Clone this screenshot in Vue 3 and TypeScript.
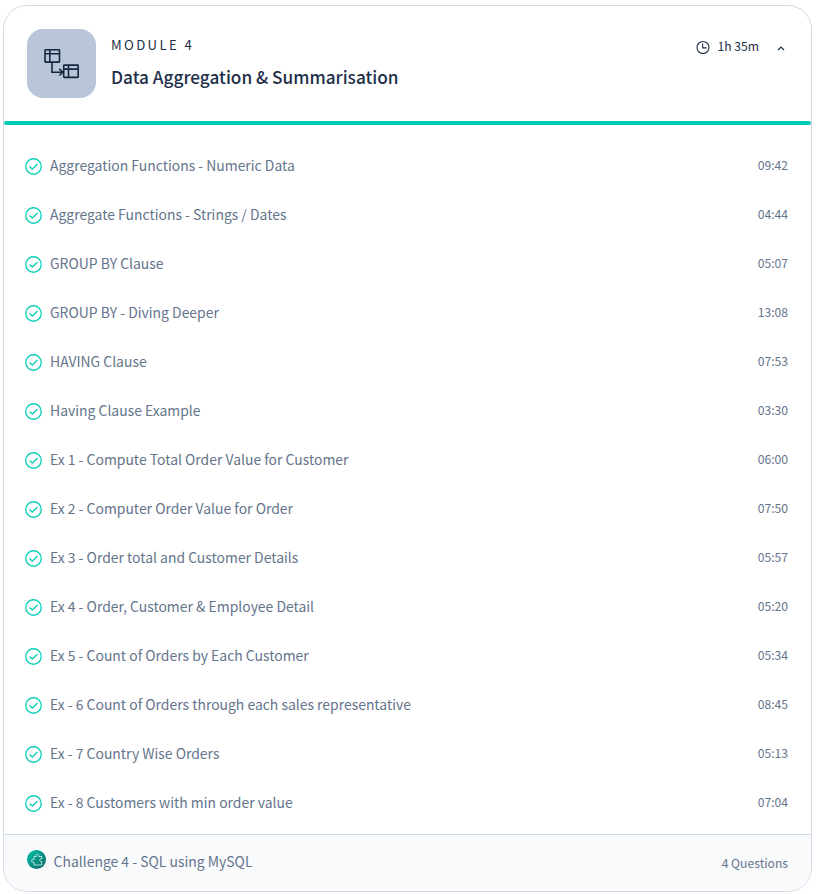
<script setup lang="ts">
interface Lesson {
  title: string
  duration: string
}

const lessons: Lesson[] = [
  { title: 'Aggregation Functions - Numeric Data', duration: '09:42' },
  { title: 'Aggregate Functions - Strings / Dates', duration: '04:44' },
  { title: 'GROUP BY Clause', duration: '05:07' },
  { title: 'GROUP BY - Diving Deeper', duration: '13:08' },
  { title: 'HAVING Clause', duration: '07:53' },
  { title: 'Having Clause Example', duration: '03:30' },
  { title: 'Ex 1 - Compute Total Order Value for Customer', duration: '06:00' },
  { title: 'Ex 2 - Computer Order Value for Order', duration: '07:50' },
  { title: 'Ex 3 - Order total and Customer Details', duration: '05:57' },
  { title: 'Ex 4 - Order, Customer & Employee Detail', duration: '05:20' },
  { title: 'Ex 5 - Count of Orders by Each Customer', duration: '05:34' },
  { title: 'Ex - 6 Count of Orders through each sales representative', duration: '08:45' },
  { title: 'Ex - 7 Country Wise Orders', duration: '05:13' },
  { title: 'Ex - 8 Customers with min order value', duration: '07:04' },
]
</script>

<template>
  <section class="card">
    <header class="header">
      <div class="tile">
        <svg width="37" height="33" viewBox="0 0 37 33" fill="none" stroke="#15263f" stroke-width="1.6">
          <rect x="2" y="2.800" width="14.500" height="12.300" rx="0.6" />
          <path d="M2 6.800H16.500M6.800 2.800V15.100" />
          <rect x="20.700" y="18.100" width="14.500" height="12.300" rx="0.6" />
          <path d="M20.700 22.100H35.200M25.500 18.100V30.400" />
          <path d="M9 15V25.200H19.700M16.300 21.900L19.700 25.200L16.300 28.500" />
        </svg>
      </div>
      <div class="heading">
        <div class="eyebrow">MODULE 4</div>
        <h2 class="title">Data Aggregation &amp; Summarisation</h2>
      </div>
      <div class="total">
        <svg class="clock" width="14" height="14" viewBox="0 0 14 14" fill="none" stroke="#1e2f4a" stroke-width="1.1">
          <circle cx="7" cy="7.500" r="6" />
          <path d="M6.700 3.500V7.900H10.500" />
        </svg>
        <span class="total-time">1h 35m</span>
        <svg class="chevron" width="8" height="6" viewBox="0 0 8 6" fill="none" stroke="#1e2f4a" stroke-width="1.2">
          <path d="M1 5L4 2L7 5" />
        </svg>
      </div>
    </header>
    <div class="progress"></div>
    <ul class="lessons">
      <li v-for="lesson in lessons" :key="lesson.title" class="lesson">
        <svg class="check" width="17" height="17" viewBox="0 0 17 17" fill="none" stroke="#10cfb9" stroke-width="1.35">
          <circle cx="8.500" cy="8.500" r="7.750" />
          <path d="M4.600 8.600L7.300 11.100L12.500 5.900" />
        </svg>
        <span class="name">{{ lesson.title }}</span>
        <span class="time">{{ lesson.duration }}</span>
      </li>
    </ul>
    <footer class="challenge">
      <svg class="badge" width="19" height="19" viewBox="0 0 19 19">
        <defs>
          <linearGradient id="badge-fill" x1="0" y1="0" x2="1" y2="1">
            <stop offset="0.15" stop-color="#05b5a1" />
            <stop offset="0.9" stop-color="#086b68" />
          </linearGradient>
        </defs>
        <circle cx="9.500" cy="9.500" r="9.500" fill="url(#badge-fill)" />
        <path
          d="M7 6.500H9.300C8.700 5 9.500 4.200 10.500 4.200S12.300 5 11.700 6.500H14.800V9C13.300 8.700 12.700 9.500 12.700 10.300S13.300 11.900 14.800 11.600V15H7V12.200C5.500 12.700 4.600 11.900 4.600 10.800S5.500 9 7 9.500Z"
          fill="none" stroke="#c5f1e9" stroke-width="0.9" stroke-linejoin="round"
        />
      </svg>
      <span class="name">Challenge 4 - SQL using MySQL</span>
      <span class="time questions">4 Questions</span>
    </footer>
  </section>
</template>

<style>
body {
  background: #fff;
}
</style>

<style scoped>
.card {
  box-sizing: border-box;
  width: 809px;
  height: 887px;
  margin: 5px 0 0 3px;
  border: 1px solid #d3dce6;
  border-radius: 24px;
  overflow: hidden;
  display: flex;
  flex-direction: column;
  background: #fff;
  font-family: "Noto Sans CJK SC", "Noto Sans", sans-serif;
  color: #64748b;
}
.header {
  box-sizing: border-box;
  height: 115px;
  padding: 23px 26px 0 23px;
  display: flex;
  align-items: flex-start;
  color: #1e2f4a;
}
.tile {
  width: 69px;
  height: 69px;
  border-radius: 16px;
  background: #b9c6d9;
  display: flex;
  align-items: center;
  justify-content: center;
}
.heading {
  margin-left: 15px;
}
.eyebrow {
  font-size: 13.2px;
  line-height: 20px;
  margin-top: 6px;
  letter-spacing: 2.35px;
}
.title {
  margin: 10px 0 0;
  font-size: 17.23px;
  line-height: 24px;
  font-weight: 500;
}
.total {
  margin-left: auto;
  display: flex;
  align-items: center;
  height: 20px;
  margin-top: 8px;
}
.total-time {
  margin: 0 0 2px 7px;
  font-size: 12.15px;
  line-height: 20px;
}
.chevron {
  margin: 2px 0 0 18px;
}
.progress {
  height: 4px;
  flex: none;
  border-radius: 2px;
  background: #00cbb5;
}
.lessons {
  list-style: none;
  margin: 0;
  padding: 17px 23px 6px 21px;
}
.lesson {
  height: 49px;
  display: flex;
  align-items: center;
}
.name {
  margin: 0 0 3px 8px;
  font-size: 13.93px;
  line-height: 20px;
  white-space: nowrap;
}
.time {
  margin: 0 0 3px auto;
  font-size: 12.15px;
  line-height: 20px;
}
.challenge {
  box-sizing: border-box;
  flex: 1;
  border-top: 1px solid #d3dce6;
  background: #f9fafc;
  padding: 0 23px 1px 23px;
  display: flex;
  align-items: center;
}
.challenge .name {
  margin-left: 7.6px;
}
.badge {
  margin-bottom: 6px;
}
.questions {
  padding-top: 3px;
}
</style>
